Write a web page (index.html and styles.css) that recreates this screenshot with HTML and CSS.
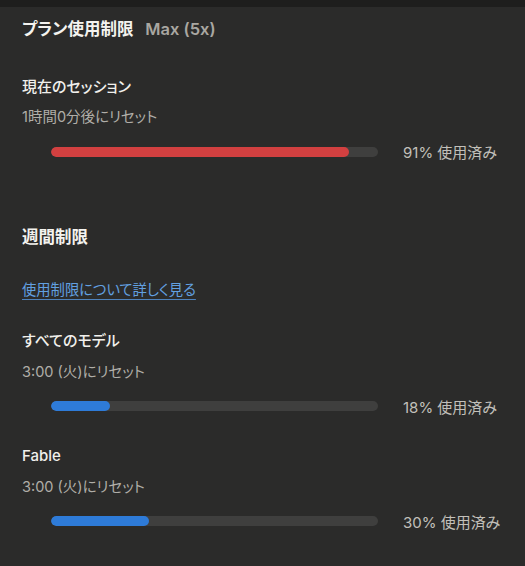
FILE: index.html
```html
<!DOCTYPE html>
<html lang="ja">
<head>
<meta charset="utf-8">
<link rel="stylesheet" href="styles.css">
</head>
<body>
<div class="topbar"></div>
<main class="panel">
  <h1 class="plan-title">プラン使用制限 <span class="plan-name">Max (5x)</span></h1>

  <section class="usage usage-session">
    <div class="usage-label">現在のセッション</div>
    <div class="usage-reset">1時間0分後にリセット</div>
    <div class="bar-row">
      <div class="bar-track"><div class="bar-fill fill-red" style="width:91%"></div></div>
      <div class="bar-text">91% 使用済み</div>
    </div>
  </section>

  <h2 class="week-title">週間制限</h2>
  <a class="learn-link" href="#">使用制限について詳しく見る</a>

  <section class="usage usage-first">
    <div class="usage-label">すべてのモデル</div>
    <div class="usage-reset">3:00 (火)にリセット</div>
    <div class="bar-row">
      <div class="bar-track"><div class="bar-fill fill-blue" style="width:18%"></div></div>
      <div class="bar-text">18% 使用済み</div>
    </div>
  </section>

  <section class="usage">
    <div class="usage-label">Fable</div>
    <div class="usage-reset">3:00 (火)にリセット</div>
    <div class="bar-row">
      <div class="bar-track"><div class="bar-fill fill-blue" style="width:30%"></div></div>
      <div class="bar-text">30% 使用済み</div>
    </div>
  </section>
</main>
</body>
</html>
```

FILE: styles.css
```css
* { box-sizing: border-box; }
html, body {
  margin: 0;
  padding: 0;
  background: #2b2b2a;
  height: 100%;
}
body {
  font-family: "Inter", "Noto Sans CJK JP", sans-serif;
  font-feature-settings: "palt";
  color: #f1f0ec;
  overflow: hidden;
}
.topbar {
  height: 7px;
  background: #1e1e1d;
}
.panel {
  padding: 12px 22px 0 22px;
  display: flex;
  flex-direction: column;
  align-items: flex-start;
}
.plan-title {
  margin: 0;
  font-size: 16.5px;
  line-height: 20px;
  font-weight: 700;
  color: #f4f3ef;
}
.plan-name {
  margin-left: 8px;
  color: #a9a7a1;
  font-weight: 600;
}
.usage {
  display: flex;
  flex-direction: column;
  align-self: stretch;
  margin-top: 30px;
}
.usage-session { margin-top: 37.5px; }
.usage-first { margin-top: 31.5px; }
.usage-label {
  font-size: 15px;
  line-height: 20px;
  font-weight: 500;
  color: #f1f0ec;
}
.usage-reset {
  margin-top: 10.5px;
  font-size: 14.5px;
  line-height: 20px;
  color: #b0aea8;
}
.bar-row {
  margin-top: 14.5px;
  display: flex;
  align-items: center;
  height: 20px;
  padding-left: 29px;
}
.bar-track {
  width: 327px;
  height: 10px;
  border-radius: 5px;
  background: #3f3f3e;
  overflow: hidden;
}
.bar-fill {
  height: 100%;
  border-radius: 5px;
}
.fill-red { background: #d24040; }
.fill-blue { background: #2e7bd8; }
.bar-text {
  margin-left: 25px;
  font-size: 15px;
  color: #c2c0ba;
  white-space: nowrap;
}
.week-title {
  margin: 65.5px 0 0 0;
  font-size: 16.5px;
  line-height: 20px;
  font-weight: 700;
  color: #f4f3ef;
}
.learn-link {
  margin-top: 32.5px;
  font-size: 14.3px;
  line-height: 20px;
  color: #62a0e0;
  text-decoration: underline;
  text-decoration-color: #4f82bb;
  text-underline-offset: 4px;
}
```
